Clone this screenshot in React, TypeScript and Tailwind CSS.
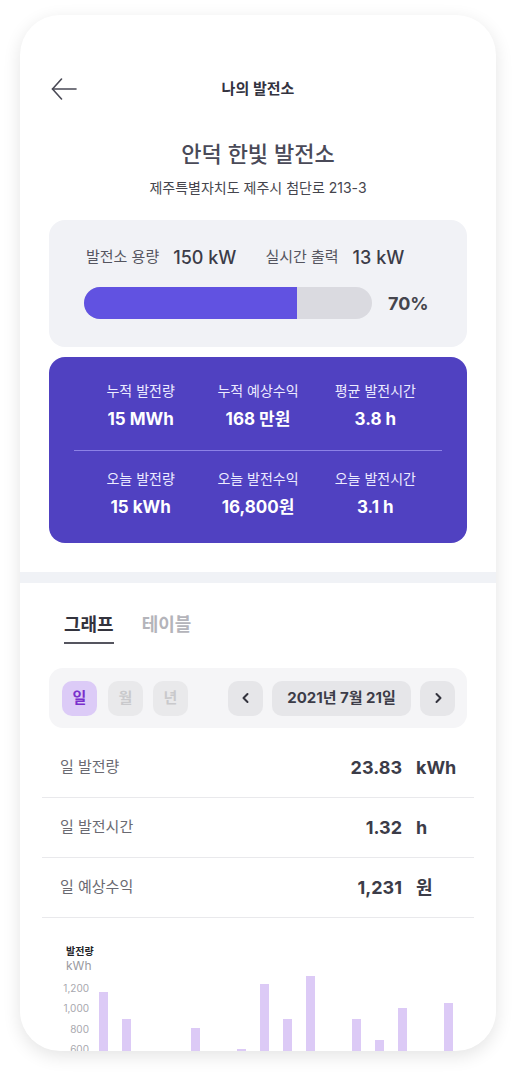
import React from "react";

const bars: number[] = [116, 89, 0, 0, 80, 0, 59, 124, 89, 132, 0, 89, 68, 100, 0, 105];
const ticks = ["1,200", "1,000", "800", "600"];

function Stat({ label, value }: { label: string; value: string }) {
  return (
    <div className="flex flex-col items-center">
      <div className="text-[14px] leading-[20px] text-[#ecebff]">{label}</div>
      <div className="mt-[6px] text-[17px] leading-[24px] font-bold text-white">{value}</div>
    </div>
  );
}

function Row({ label, num, unit }: { label: string; num: string; unit: string }) {
  return (
    <div className="flex h-[60px] items-center border-b border-[#e9e9ec] pl-[18px]">
      <div className="flex-1 text-[15px] text-[#6a6a72]">{label}</div>
      <div className="text-[18px] font-bold text-[#3c3c48]">{num}</div>
      <div className="ml-[14px] w-[58px] text-[18px] font-bold text-[#3c3c48]">{unit}</div>
    </div>
  );
}

export default function App() {
  return (
    <div
      className="min-h-[1074px] bg-white pt-[15px]"
      style={{ fontFamily: 'Inter, "Noto Sans CJK KR", sans-serif' }}
    >
      <div className="mx-auto h-[1036px] w-[476px] overflow-hidden rounded-[40px] bg-white shadow-[0_5px_18px_rgba(0,0,0,0.11)]">
        {/* header */}
        <div className="relative mt-[62px] flex h-[24px] items-center justify-center">
          <svg
            className="absolute left-[31px] top-[1px]"
            width="26"
            height="22"
            viewBox="0 0 26 22"
            fill="none"
            stroke="#4a4a55"
            strokeWidth="1.6"
            strokeLinecap="round"
            strokeLinejoin="round"
          >
            <path d="M1.5 11H25" />
            <path d="M10.5 1L1.5 11L10.5 21" />
          </svg>
          <div className="text-[15px] font-semibold text-[#33333f]">나의 발전소</div>
        </div>

        <div className="mt-[38px] text-center text-[22px] leading-[30px] font-medium text-[#4a4a58]">
          안덕 한빛 발전소
        </div>
        <div className="mt-[9px] text-center text-[14px] leading-[20px] text-[#45454d]">
          제주특별자치도 제주시 첨단로 213-3
        </div>

        {/* capacity card */}
        <div className="mx-[29px] mt-[22px] h-[127px] rounded-[16px] bg-[#f1f2f6] pl-[35px] pt-[25px]">
          <div className="flex h-[24px] items-center pl-[2px]">
            <span className="text-[15px] text-[#55555f]">발전소 용량</span>
            <span className="ml-[14px] text-[18px] font-medium text-[#3c3c48]">150 kW</span>
            <span className="ml-[29px] text-[15px] text-[#55555f]">실시간 출력</span>
            <span className="ml-[14px] text-[18px] font-medium text-[#3c3c48]">13 kW</span>
          </div>
          <div className="mt-[18px] flex items-center">
            <div className="h-[32px] w-[288px] overflow-hidden rounded-full bg-[#dadae0]">
              <div className="h-full w-[213px] bg-[#6152e1]" />
            </div>
            <span className="ml-[16px] text-[18px] font-bold text-[#45454d]">70%</span>
          </div>
        </div>

        {/* purple stats panel */}
        <div className="mx-[29px] mt-[10px] rounded-[16px] bg-[#5041c1] pb-[24px] pt-[24px]">
          <div className="grid grid-cols-3 px-[33px]">
            <Stat label="누적 발전량" value="15 MWh" />
            <Stat label="누적 예상수익" value="168 만원" />
            <Stat label="평균 발전시간" value="3.8 h" />
          </div>
          <div className="mx-[25px] mt-[19px] h-px bg-[#8c81e6]" />
          <div className="mt-[18px] grid grid-cols-3 px-[33px]">
            <Stat label="오늘 발전량" value="15 kWh" />
            <Stat label="오늘 발전수익" value="16,800원" />
            <Stat label="오늘 발전시간" value="3.1 h" />
          </div>
        </div>

        {/* band */}
        <div className="mt-[29px] h-[11px] bg-[#f0f2f6]" />

        {/* tabs */}
        <div className="mt-[30px] flex gap-[28px] pl-[44px]">
          <div className="border-b-2 border-[#55555f] pb-[5px] text-[18px] leading-[24px] font-bold text-[#33333d]">
            그래프
          </div>
          <div className="text-[18px] leading-[24px] font-bold text-[#b4b4ba]">테이블</div>
        </div>

        {/* filter bar */}
        <div className="mx-[29px] mt-[24px] flex h-[60px] items-center rounded-[14px] bg-[#f5f5f7] pl-[13px] pr-[12px]">
          <div className="flex h-[35px] w-[35px] items-center justify-center rounded-[10px] bg-[#dccbf7] text-[15px] font-bold text-[#7a2fcc]">
            일
          </div>
          <div className="ml-[11px] flex h-[35px] w-[35px] items-center justify-center rounded-[10px] bg-[#e9e9eb] text-[15px] font-bold text-[#c9c9cc]">
            월
          </div>
          <div className="ml-[10px] flex h-[35px] w-[35px] items-center justify-center rounded-[10px] bg-[#e9e9eb] text-[15px] font-bold text-[#c9c9cc]">
            년
          </div>
          <div className="ml-auto flex h-[35px] w-[35px] items-center justify-center rounded-[10px] bg-[#e6e6e9]">
            <svg width="12" height="12" viewBox="0 0 12 12" fill="none" stroke="#33333d" strokeWidth="2" strokeLinecap="round" strokeLinejoin="round">
              <path d="M7.5 2L3.5 6L7.5 10" />
            </svg>
          </div>
          <div className="ml-[9px] flex h-[35px] w-[139px] items-center justify-center rounded-[10px] bg-[#e6e6e9] text-[15px] font-bold text-[#3c3c48]">
            2021년 7월 21일
          </div>
          <div className="ml-[9px] flex h-[35px] w-[35px] items-center justify-center rounded-[10px] bg-[#e6e6e9]">
            <svg width="12" height="12" viewBox="0 0 12 12" fill="none" stroke="#33333d" strokeWidth="2" strokeLinecap="round" strokeLinejoin="round">
              <path d="M4.5 2L8.5 6L4.5 10" />
            </svg>
          </div>
        </div>

        {/* rows */}
        <div className="mx-[22px] mt-[10px]">
          <Row label="일 발전량" num="23.83" unit="kWh" />
          <Row label="일 발전시간" num="1.32" unit="h" />
          <Row label="일 예상수익" num="1,231" unit="원" />
        </div>

        {/* chart */}
        <div className="mt-[26px] flex pl-[46px]">
          <div className="flex w-[23px] flex-col">
            <div className="whitespace-nowrap text-[10px] leading-[14px] font-bold text-[#222228]">발전량</div>
            <div className="whitespace-nowrap text-right text-[12px] leading-[16px] text-[#9a9aa0]">kWh</div>
            <div className="mt-[4px] flex flex-col items-end">
              {ticks.map((t) => (
                <div key={t} className="h-[20.3px] whitespace-nowrap text-[10px] leading-[20px] text-[#a8a8ae]">
                  {t}
                </div>
              ))}
            </div>
          </div>
          <div className="ml-[10px] flex h-[164px] items-end gap-[14px]">
            {bars.map((h, i) => (
              <div key={i} className="w-[9px] bg-[#dccaf6]" style={{ height: `${h}px` }} />
            ))}
          </div>
        </div>
      </div>
    </div>
  );
}
